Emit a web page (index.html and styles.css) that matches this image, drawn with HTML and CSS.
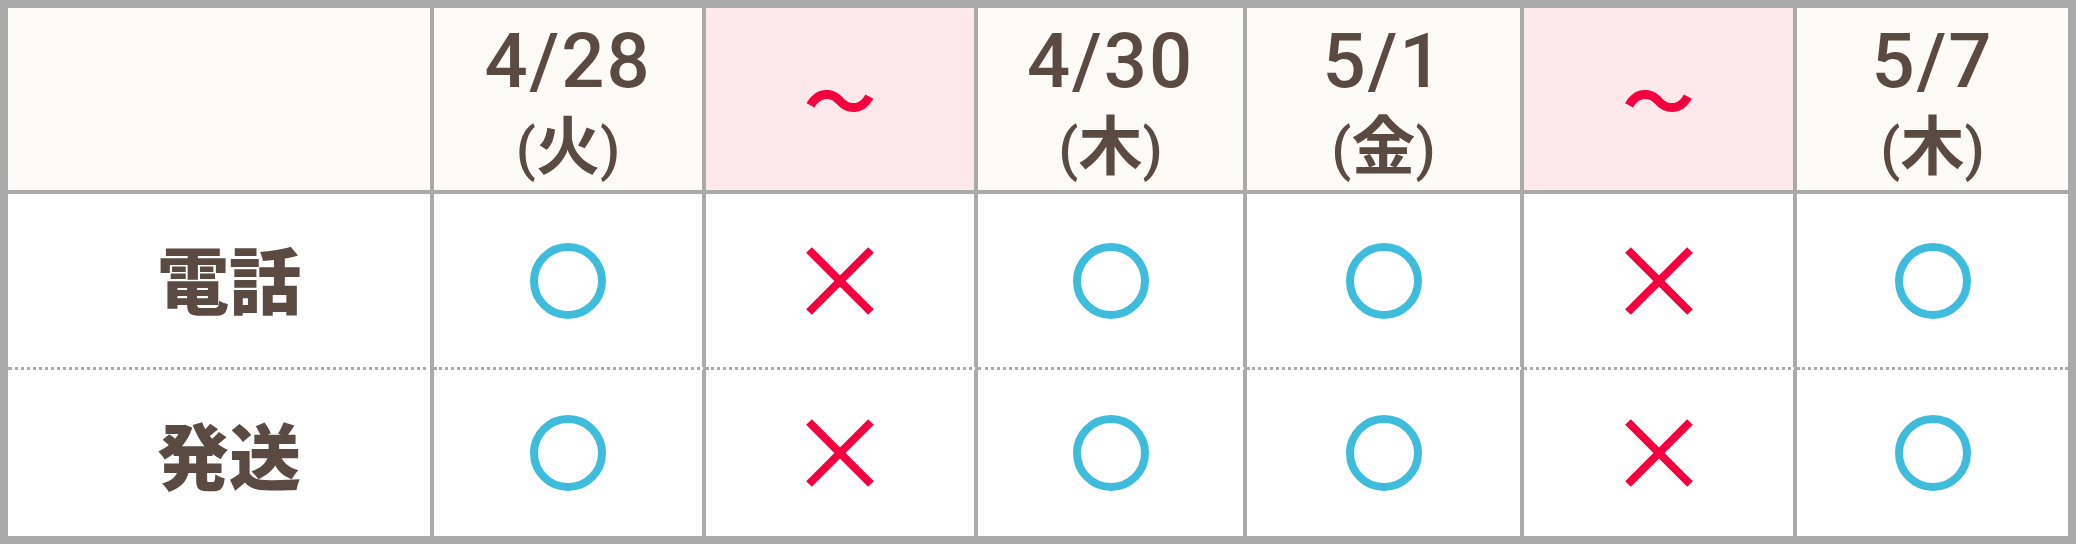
FILE: index.html
```html
<!DOCTYPE html>
<html lang="ja">
<head>
<meta charset="utf-8">
<title>営業日カレンダー</title>
<link rel="stylesheet" href="styles.css">
</head>
<body>
<div class="schedule">
  <div class="cell head corner"></div>
  <div class="cell head"><span class="date">4/28</span><span class="day">(<span class="kanji">火</span>)</span></div>
  <div class="cell head closed"><span class="wave">～</span></div>
  <div class="cell head"><span class="date">4/30</span><span class="day">(<span class="kanji">木</span>)</span></div>
  <div class="cell head"><span class="date">5/1</span><span class="day">(<span class="kanji">金</span>)</span></div>
  <div class="cell head closed"><span class="wave">～</span></div>
  <div class="cell head last"><span class="date">5/7</span><span class="day">(<span class="kanji">木</span>)</span></div>

  <div class="cell label first-row">電話</div>
  <div class="cell first-row"><span class="ok" role="img" aria-label="○"></span></div>
  <div class="cell first-row"><svg class="ng" viewBox="0 0 68 68" role="img" aria-label="×"><path d="M3 3L65 65M65 3L3 65"/></svg></div>
  <div class="cell first-row"><span class="ok" role="img" aria-label="○"></span></div>
  <div class="cell first-row"><span class="ok" role="img" aria-label="○"></span></div>
  <div class="cell first-row"><svg class="ng" viewBox="0 0 68 68" role="img" aria-label="×"><path d="M3 3L65 65M65 3L3 65"/></svg></div>
  <div class="cell first-row last"><span class="ok" role="img" aria-label="○"></span></div>

  <div class="cell label">発送</div>
  <div class="cell"><span class="ok" role="img" aria-label="○"></span></div>
  <div class="cell"><svg class="ng" viewBox="0 0 68 68" role="img" aria-label="×"><path d="M3 3L65 65M65 3L3 65"/></svg></div>
  <div class="cell"><span class="ok" role="img" aria-label="○"></span></div>
  <div class="cell"><span class="ok" role="img" aria-label="○"></span></div>
  <div class="cell"><svg class="ng" viewBox="0 0 68 68" role="img" aria-label="×"><path d="M3 3L65 65M65 3L3 65"/></svg></div>
  <div class="cell last"><span class="ok" role="img" aria-label="○"></span></div>
</div>
</body>
</html>
```

FILE: styles.css
```css
* { box-sizing: border-box; }

html, body {
  margin: 0;
  padding: 0;
  background: #ffffff;
}

body {
  font-family: "Noto Sans CJK JP", "Noto Sans", sans-serif;
  color: #5a4a42;
}

.schedule {
  width: 2076px;
  height: 544px;
  border: 8px solid #aaaaaa;
  display: grid;
  grid-template-columns: 426px 272px 272px 269px 277px 273px 271px;
  grid-template-rows: 186px 176px 166px;
  background: #ffffff;
}

.cell {
  border-right: 4px solid #aaaaaa;
  display: flex;
  flex-direction: column;
  align-items: center;
  justify-content: center;
  background: #ffffff;
}

.cell.last {
  border-right: none;
}

.head {
  background: #fcfbf7;
  border-bottom: 4px solid #aaaaaa;
  justify-content: flex-start;
  padding-top: 15px;
}

.head.closed {
  background: #fde8eb;
  justify-content: center;
  padding-top: 0;
}

.first-row {
  border-bottom: 3px dotted #aaaaaa;
}

.date {
  display: block;
  font-family: "Roboto", "Noto Sans CJK JP", sans-serif;
  font-size: 76px;
  font-weight: 500;
  line-height: 76px;
  letter-spacing: 2px;
  height: 76px;
}

.day {
  display: block;
  font-family: "Roboto", "Noto Sans CJK JP", sans-serif;
  font-size: 58px;
  font-weight: 500;
  line-height: 60px;
  height: 60px;
  margin-top: 12px;
  white-space: nowrap;
}

.kanji {
  font-family: "Noto Sans CJK JP", sans-serif;
  font-size: 64px;
  font-weight: 700;
  line-height: 60px;
}

.wave {
  font-family: "Noto Sans CJK JP", sans-serif;
  font-size: 72px;
  font-weight: 700;
  color: #f5003f;
  line-height: 1;
  margin-top: -4px;
}

.label {
  font-size: 72px;
  font-weight: 900;
  padding-left: 20px;
  line-height: 1;
}

.label.first-row {
  padding-bottom: 8px;
}

.ok {
  display: block;
  width: 76px;
  height: 76px;
  border: 8px solid #3fbcdc;
  border-radius: 50%;
}

.ng {
  display: block;
  width: 68px;
  height: 68px;
}

.ng path {
  fill: none;
  stroke: #f5003f;
  stroke-width: 8;
}
```
